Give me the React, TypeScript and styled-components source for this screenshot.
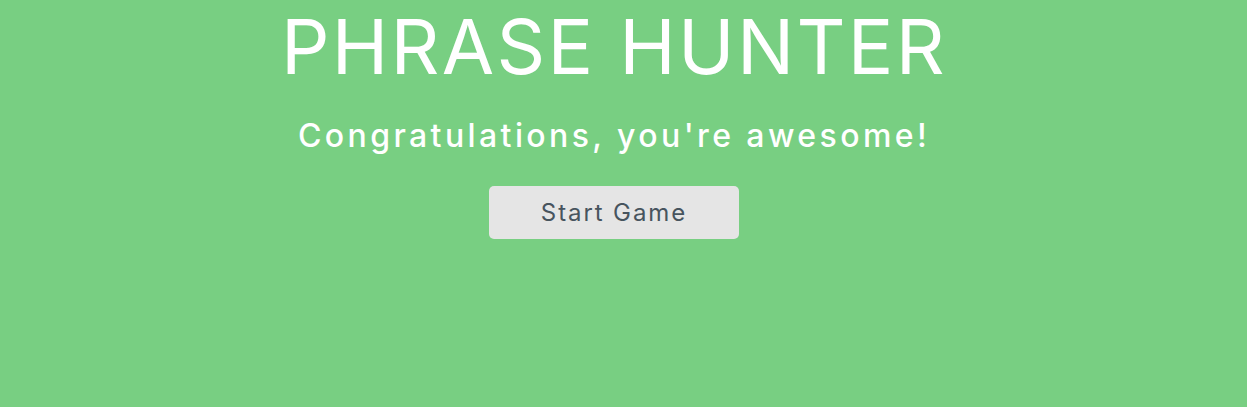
import React from "react";
import styled, { createGlobalStyle } from "styled-components";

const Global = createGlobalStyle`
  html, body { margin: 0; padding: 0; }
  body {
    background: #78cf82;
    font-family: Inter, "Noto Sans", sans-serif;
    height: 407px;
    overflow: hidden;
  }
`;

const Overlay = styled.div`
  display: flex;
  flex-direction: column;
  align-items: center;
  height: 407px;
  background: #78cf82;
  padding: 0 19px 0 0;
  box-sizing: border-box;
`;

const Title = styled.h1`
  margin: 0;
  color: #ffffff;
  font-weight: 400;
  font-size: 76px;
  line-height: normal;
  letter-spacing: 2.3px;
`;

const Message = styled.h2`
  margin: 24px 0 0;
  color: #ffffff;
  font-weight: 500;
  font-size: 32px;
  line-height: normal;
  letter-spacing: 3.4px;
`;

const StartButton = styled.button`
  margin-top: 31px;
  width: 250px;
  height: 53px;
  border: none;
  border-radius: 5px;
  background: #e5e5e5;
  color: #47545e;
  font-family: Inter, "Noto Sans", sans-serif;
  font-size: 24px;
  letter-spacing: 1.9px;
  cursor: pointer;
  padding: 0;
`;

export default function App() {
  return (
    <>
      <Global />
      <Overlay>
        <Title>PHRASE HUNTER</Title>
        <Message>Congratulations, you're awesome!</Message>
        <StartButton>Start Game</StartButton>
      </Overlay>
    </>
  );
}
